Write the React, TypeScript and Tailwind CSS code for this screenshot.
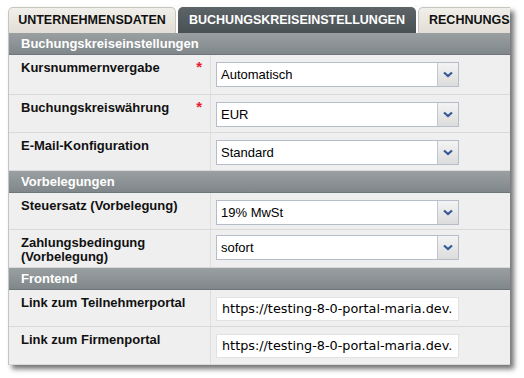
import React from 'react';

const font = { fontFamily: '"Liberation Sans", Arial, sans-serif' };

const Section = ({ title }: { title: string }) => (
  <div className="h-[22px] flex items-center px-[12px] bg-gradient-to-b from-[#9aa0a2] to-[#80878a] text-white font-bold text-[13px] border-b border-[#6f7679]">
    {title}
  </div>
);

const Chevron = () => (
  <svg width="10" height="7" viewBox="0 0 10 7">
    <path d="M1 1.5 L5 5 L9 1.5" fill="none" stroke="#34589a" strokeWidth="2.2" />
  </svg>
);

const Select = ({ value }: { value: string }) => (
  <div className="flex w-[243px] h-[25px] border border-[#b7bccb] bg-white">
    <div className="flex-1 flex items-center px-[4px] text-[13px] text-black">{value}</div>
    <div className="w-[21px] flex items-center justify-center border-l border-[#c2c6d0] bg-gradient-to-b from-[#f4f4f4] to-[#dcdcdc]">
      <Chevron />
    </div>
  </div>
);

const Input = ({ value }: { value: string }) => (
  <div className="w-[243px] h-[24px] flex items-center px-[5px] bg-white border border-[#e2e2e2] text-[12.8px] text-black whitespace-nowrap overflow-hidden font-['DejaVu_Sans',sans-serif]">
    {value}
  </div>
);

const Row = ({
  label,
  required,
  children,
  h = 'h-[38px]',
}: {
  label: React.ReactNode;
  required?: boolean;
  children: React.ReactNode;
  h?: string;
}) => (
  <div className={`flex ${h} bg-[#efefef] border-b border-[#d9d9d9]`}>
    <div className="w-[202px] shrink-0 flex justify-between pl-[12px] pr-[8px] pt-[5px] border-r border-[#dedede]">
      <span className="font-bold text-[13px] leading-[14px] text-[#111] pt-[1px]">{label}</span>
      {required && <span className="text-[#e8202a] font-bold text-[15px] leading-[14px]">*</span>}
    </div>
    <div className="pl-[5px] pt-[7px]">{children}</div>
  </div>
);

export default function App() {
  return (
    <div className="w-[524px] h-[378px] bg-white pt-[7px] pl-[8px]" style={font}>
      <div className="w-[502px] shadow-[4px_4px_5px_rgba(0,0,0,0.55)] overflow-hidden">
        <div className="flex gap-[2px] h-[26px] bg-white">
          <div className="w-[168px] shrink-0 rounded-t-[5px] bg-gradient-to-b from-[#f1efea] to-[#e2ded6] border border-b-0 border-[#c9c6bf] flex items-center justify-center text-[12.5px] font-bold text-[#111]">
            UNTERNEHMENSDATEN
          </div>
          <div className="w-[238px] shrink-0 rounded-t-[5px] bg-gradient-to-b from-[#5d6468] to-[#4a5155] flex items-center justify-center text-[12.5px] font-bold text-white">
            BUCHUNGSKREISEINSTELLUNGEN
          </div>
          <div className="flex-1 rounded-tl-[5px] bg-gradient-to-b from-[#f1efea] to-[#e2ded6] border border-b-0 border-r-0 border-[#c9c6bf] flex items-center pl-[10px] text-[12.5px] font-bold text-[#111] whitespace-nowrap overflow-hidden">
            RECHNUNGSS
          </div>
        </div>
        <div className="border-l border-[#c4c4c4]">
          <Section title="Buchungskreiseinstellungen" />
          <Row label="Kursnummernvergabe" required h="h-[40px]">
            <Select value="Automatisch" />
          </Row>
          <Row label="Buchungskreiswährung" required>
            <Select value="EUR" />
          </Row>
          <Row label="E-Mail-Konfiguration">
            <Select value="Standard" />
          </Row>
          <Section title="Vorbelegungen" />
          <Row label="Steuersatz (Vorbelegung)" h="h-[37px]">
            <Select value="19% MwSt" />
          </Row>
          <Row label={<>Zahlungsbedingung<br />(Vorbelegung)</>}>
            <div className="-mt-[2px]">
              <Select value="sofort" />
            </div>
          </Row>
          <Section title="Frontend" />
          <Row label="Link zum Teilnehmerportal" h="h-[37px]">
            <Input value="https://testing-8-0-portal-maria.dev." />
          </Row>
          <Row label="Link zum Firmenportal" h="h-[38px]">
            <Input value="https://testing-8-0-portal-maria.dev." />
          </Row>
        </div>
      </div>
    </div>
  );
}
